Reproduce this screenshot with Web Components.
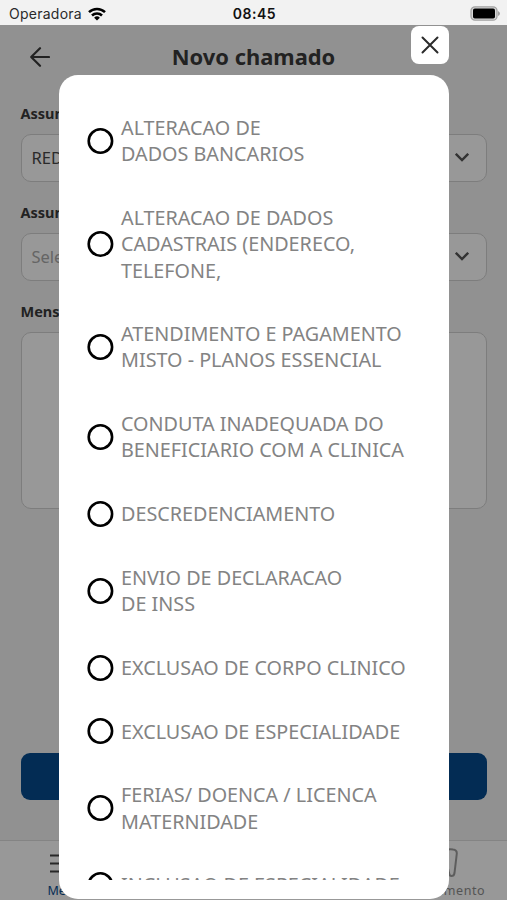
<!DOCTYPE html>
<html lang="pt-BR">
<head>
<meta charset="UTF-8">
<title>Novo chamado</title>
<style>
  body {
    margin: 0;
    height: 900px;
    overflow: hidden;
    font-family: "Noto Sans", "Open Sans", sans-serif;
  }
</style>
</head>
<body>
<ticket-screen></ticket-screen>
<script>
class StatusBar extends HTMLElement {
  connectedCallback() {
    this.attachShadow({ mode: 'open' });
    this.shadowRoot.innerHTML = `
      <style>
        :host {
          display: grid;
          grid-template-columns: 1fr auto 1fr;
          align-items: center;
          height: 25px;
          padding: 2px 7px 0 9px;
          box-sizing: border-box;
          background: #f2f2f2;
          color: #111;
          font-family: Inter, "Liberation Sans", sans-serif;
          font-size: 14px;
        }
        .carrier {
          display: flex;
          align-items: center;
          gap: 6px;
          letter-spacing: 0.25px;
          color: #2a2a2a;
        }
        .time {
          font-weight: 600;
          letter-spacing: 0.5px;
        }
        .battery {
          justify-self: end;
        }
        svg {
          display: block;
        }
      </style>
      <div class="carrier">
        <span>Operadora</span>
        <svg width="18" height="14" viewBox="0 0 18 14" fill="none" stroke="#000" stroke-width="2.5">
          <path d="M1 5.2a11.4 11.4 0 0 1 16 0"/>
          <path d="M4 8.5a7.1 7.1 0 0 1 10 0"/>
          <path d="M9 13.6L6.1 10.7a4.1 4.1 0 0 1 5.8 0z" fill="#000" stroke="none"/>
        </svg>
      </div>
      <div class="time">08:45</div>
      <svg class="battery" width="30" height="15" viewBox="0 0 30 15">
        <rect x="1" y=".8" width="26" height="13.400" rx="4" fill="#d8d8d8" stroke="#a2a2a2" stroke-width="1.3"/>
        <rect x="3" y="2.500" width="22" height="10" rx="1.8" fill="#000"/>
        <path d="M28 5v5q2-1 2-2.500t-2-2.500z" fill="#a2a2a2"/>
      </svg>
    `;
  }
}
customElements.define('status-bar', StatusBar);

class PageHeader extends HTMLElement {
  connectedCallback() {
    this.attachShadow({ mode: 'open' });
    this.shadowRoot.innerHTML = `
      <style>
        :host {
          display: grid;
          grid-template-columns: 38px 1fr 38px;
          align-items: center;
          height: 63px;
          padding: 0 21px;
          color: #3a3a3a;
        }
        h1 {
          margin: 0;
          text-align: center;
          font-size: 21.9px;
          font-weight: 700;
        }
        svg {
          display: block;
          margin-left: 9px;
        }
      </style>
      <svg width="20" height="20" viewBox="0 0 20 20" fill="none" stroke="#3a3a3a" stroke-width="2.2" stroke-linecap="round" stroke-linejoin="round">
        <path d="M19 10H1.200M10 1.200L1.200 10l8.800 8.800"/>
      </svg>
      <h1><slot></slot></h1>
    `;
  }
}
customElements.define('page-header', PageHeader);

class FormField extends HTMLElement {
  connectedCallback() {
    const type = this.getAttribute('type');
    this.attachShadow({ mode: 'open' });
    this.shadowRoot.innerHTML = `
      <style>
        :host {
          display: block;
          color: #474747;
        }
        label {
          display: block;
          height: 21px;
          margin-bottom: 10px;
          font-size: 14.5px;
          line-height: 21px;
          font-weight: 700;
          color: #3a3a3a;
        }
        .box {
          display: flex;
          align-items: center;
          justify-content: space-between;
          box-sizing: border-box;
          height: 48px;
          padding: 0 17px 0 10px;
          border: 1px solid #d0d0d0;
          border-radius: 10px;
          background: #fefefe;
          font-size: 16.5px;
        }
        .box.textarea {
          height: 177px;
        }
        .box.textarea svg {
          display: none;
        }
        :host([placeholder]) .box span {
          color: #a8a8a8;
        }
      </style>
      <label>${this.getAttribute('label')}</label>
      <div class="box ${type}">
        <span><slot></slot></span>
        <svg width="14" height="9" viewBox="0 0 14 9" fill="none" stroke="#555" stroke-width="2.4">
          <path d="M0.800 .8L7 7l6.200-6.200"/>
        </svg>
      </div>
    `;
  }
}
customElements.define('form-field', FormField);

class TabBar extends HTMLElement {
  connectedCallback() {
    this.attachShadow({ mode: 'open' });
    this.shadowRoot.innerHTML = `
      <style>
        :host {
          display: grid;
          grid-template-columns: repeat(4, 1fr);
          height: 60px;
          box-sizing: border-box;
          border-top: 1px solid #dcdcdc;
          background: #fdfdfd;
          font-size: 12.5px;
        }
        .tab {
          display: flex;
          flex-direction: column;
          align-items: center;
          padding-top: 7px;
          gap: 4px;
          color: #8d8d8d;
          letter-spacing: 0.6px;
          line-height: 18px;
        }
        .tab.active {
          color: #074a8c;
          letter-spacing: 0;
        }
        .tab.active span {
          padding-left: 2px;
        }
        svg {
          display: block;
          flex: none;
        }
      </style>
      <div class="tab active">
        <svg width="26" height="30" viewBox="0 0 26 30" stroke="#444" stroke-width="2">
          <path d="M0 7.500h26M0 15.500h26M0 23.500h26"/>
        </svg>
        <span>Menu</span>
      </div>
      <div class="tab"></div>
      <div class="tab"></div>
      <div class="tab">
        <svg width="28" height="30" viewBox="0 0 28 30" fill="none" stroke="#9c9c9c" stroke-width="2">
          <path d="M5 1.500q4-.8 9 1 5-1.800 9-1 4 .5 3.800 4L24.500 25q-.5 3-3 3-2 0-2.500-3-1-8-5-8t-5 8q-.5 3-2.500 3-2.500 0-3-3L1.200 5.500q-.2-3.500 3.800-4z"/>
        </svg>
        <span>Atendimento</span>
      </div>
    `;
  }
}
customElements.define('tab-bar', TabBar);

class RadioOption extends HTMLElement {
  connectedCallback() {
    this.attachShadow({ mode: 'open' });
    this.shadowRoot.innerHTML = `
      <style>
        :host {
          display: flex;
          align-items: center;
          gap: 7px;
          flex: none;
          font-size: 19.77px;
          line-height: 26.5px;
          color: #838383;
        }
        svg {
          display: block;
          flex: none;
        }
        .text {
          white-space: nowrap;
        }
      </style>
      <svg width="27" height="27" viewBox="0 0 27 27" fill="none" stroke="#000" stroke-width="2.6">
        <circle cx="13.400" cy="13" r="11.700"/>
      </svg>
      <div class="text"><slot></slot></div>
    `;
  }
}
customElements.define('radio-option', RadioOption);

class OptionsModal extends HTMLElement {
  connectedCallback() {
    this.attachShadow({ mode: 'open' });
    this.shadowRoot.innerHTML = `
      <style>
        :host {
          position: absolute;
          inset: 25px 0 0 0;
          display: flex;
          flex-direction: column;
          align-items: flex-end;
          gap: 11px;
          box-sizing: border-box;
          padding: 1px 58.5px 1px 59px;
          background: rgba(0, 0, 0, 0.4);
        }
        .close {
          display: flex;
          align-items: center;
          justify-content: center;
          width: 38px;
          height: 38px;
          border-radius: 8px;
          background: #fff;
        }
        .panel {
          flex: 1;
          min-height: 0;
          align-self: stretch;
          box-sizing: border-box;
          padding: 39.7px 28px 19.5px;
          border-radius: 19px;
          background: #fff;
        }
        .list {
          display: flex;
          flex-direction: column;
          gap: 36.9px;
          height: 100%;
          overflow: hidden;
        }
      </style>
      <div class="close">
        <svg width="18" height="18" viewBox="0 0 18 18" stroke="#2b2b2b" stroke-width="2" stroke-linecap="round">
          <path d="M1.500 1.500l15 15M16.500 1.500l-15 15"/>
        </svg>
      </div>
      <div class="panel"><div class="list"><slot></slot></div></div>
    `;
  }
}
customElements.define('options-modal', OptionsModal);

class TicketScreen extends HTMLElement {
  connectedCallback() {
    this.attachShadow({ mode: 'open' });
    this.shadowRoot.innerHTML = `
      <style>
        :host {
          position: relative;
          display: flex;
          flex-direction: column;
          height: 900px;
          background: #f2f2f2;
        }
        .form {
          flex: 1;
          display: flex;
          flex-direction: column;
          gap: 19.9px;
          padding: 14.8px 20.5px 39.6px;
        }
        .submit {
          height: 47.4px;
          margin-top: auto;
          border: 0;
          border-radius: 9px;
          background: #054a8c;
        }
      </style>
      <status-bar></status-bar>
      <page-header>Novo chamado</page-header>
      <div class="form">
        <form-field label="Assunto" type="select">REDE</form-field>
        <form-field label="Assunto" type="select" placeholder>Selecione</form-field>
        <form-field label="Mensagem" type="textarea"></form-field>
        <button class="submit"></button>
      </div>
      <tab-bar></tab-bar>
      <options-modal>
        <radio-option>ALTERACAO DE<br>DADOS BANCARIOS</radio-option>
        <radio-option>ALTERACAO DE DADOS<br>CADASTRAIS (ENDERECO,<br>TELEFONE,</radio-option>
        <radio-option>ATENDIMENTO E PAGAMENTO<br>MISTO - PLANOS ESSENCIAL</radio-option>
        <radio-option>CONDUTA INADEQUADA DO<br>BENEFICIARIO COM A CLINICA</radio-option>
        <radio-option>DESCREDENCIAMENTO</radio-option>
        <radio-option>ENVIO DE DECLARACAO<br>DE INSS</radio-option>
        <radio-option>EXCLUSAO DE CORPO CLINICO</radio-option>
        <radio-option>EXCLUSAO DE ESPECIALIDADE</radio-option>
        <radio-option>FERIAS/ DOENCA / LICENCA<br>MATERNIDADE</radio-option>
        <radio-option>INCLUSAO DE ESPECIALIDADE</radio-option>
      </options-modal>
    `;
  }
}
customElements.define('ticket-screen', TicketScreen);
</script>
</body>
</html>
